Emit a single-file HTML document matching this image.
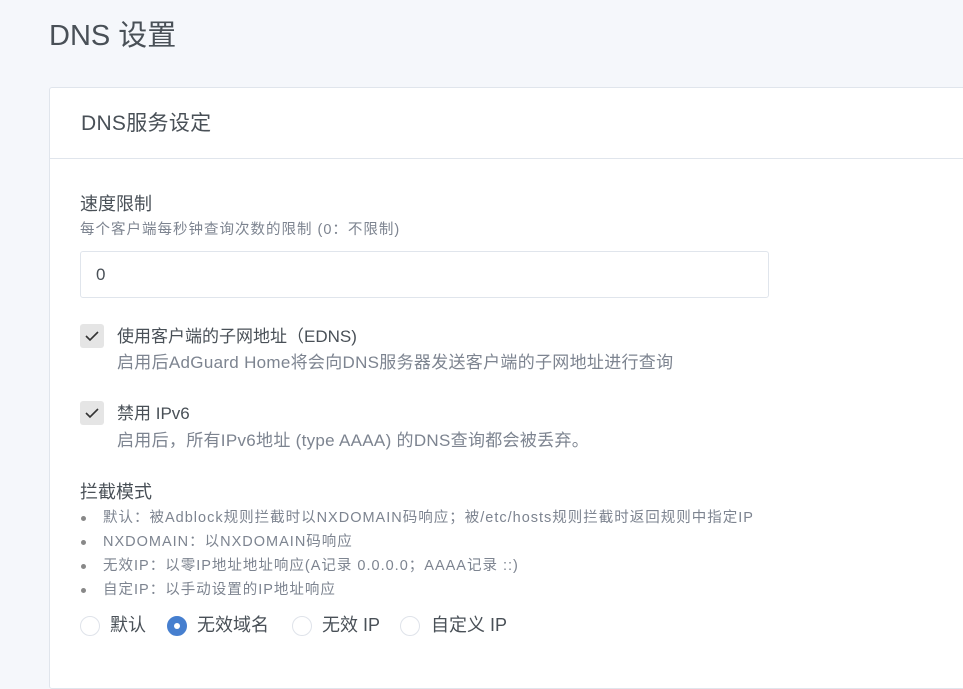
<!DOCTYPE html>
<html><head><meta charset="utf-8"><style>
body{margin:0;width:963px;height:645px;overflow:hidden;background:#f5f7fb;font-family:"Liberation Sans","Noto Sans CJK SC",sans-serif;color:#495057;position:relative}
.a{position:absolute;white-space:nowrap;line-height:1}
.card{position:absolute;left:49px;top:87px;width:930px;height:600px;background:#fff;border:1px solid #e0e5ec;border-radius:3px}
.hr{position:absolute;left:50px;top:158px;width:920px;height:1px;background:#e0e5ec}
.inp{position:absolute;left:80px;top:251px;width:687px;height:45px;border:1px solid #e0e5ec;border-radius:3px;background:#fff}
.cb{position:absolute;left:80px;width:24px;height:24px;background:#e5e5e5;border-radius:3px}
.cb svg{position:absolute;left:5px;top:6px}
.g{color:#7d8490}
.dot{position:absolute;left:81px;width:5px;height:5px;border-radius:50%;background:#888}
.r{position:absolute;top:616px;width:18px;height:18px;border:1px solid #dfe3ea;border-radius:50%;background:#fff}
.s{font-size:14.5px;letter-spacing:1px}
</style></head><body>
<div class="a" style="left:49px;top:22px;font-size:29px">DNS 设置</div>
<div class="card"></div>
<div class="hr"></div>
<div class="a" style="left:81px;top:113px;font-size:21px;letter-spacing:0.3px">DNS服务设定</div>
<div class="a" style="left:80px;top:195px;font-size:18px">速度限制</div>
<div class="a g s" style="left:80px;top:223px">每个客户端每秒钟查询次数的限制 (0：不限制)</div>
<div class="inp"></div>
<div class="a" style="left:96px;top:266px;font-size:17px">0</div>
<div class="cb" style="top:324px"><svg width="14" height="12" viewBox="0 0 14 12"><path d="M1 6l4 4 8-8" fill="none" stroke="#333" stroke-width="1.6"/></svg></div>
<div class="a" style="left:117px;top:328px;font-size:17px">使用客户端的子网地址（EDNS)</div>
<div class="a g" style="left:117px;top:354px;font-size:17px;letter-spacing:0.3px">启用后AdGuard Home将会向DNS服务器发送客户端的子网地址进行查询</div>
<div class="cb" style="top:401px"><svg width="14" height="12" viewBox="0 0 14 12"><path d="M1 6l4 4 8-8" fill="none" stroke="#333" stroke-width="1.6"/></svg></div>
<div class="a" style="left:117px;top:405px;font-size:17px">禁用 IPv6</div>
<div class="a g" style="left:117px;top:432px;font-size:17px;letter-spacing:0.3px">启用后，所有IPv6地址 (type AAAA) 的DNS查询都会被丢弃。</div>
<div class="a" style="left:80px;top:483px;font-size:18px">拦截模式</div>
<div class="dot" style="top:516px"></div><div class="a g s" style="left:103px;top:511px">默认：被Adblock规则拦截时以NXDOMAIN码响应；被/etc/hosts规则拦截时返回规则中指定IP</div>
<div class="dot" style="top:540px"></div><div class="a g s" style="left:103px;top:535px">NXDOMAIN：以NXDOMAIN码响应</div>
<div class="dot" style="top:564px"></div><div class="a g s" style="left:103px;top:559px">无效IP：以零IP地址地址响应(A记录 0.0.0.0；AAAA记录 ::)</div>
<div class="dot" style="top:588px"></div><div class="a g s" style="left:103px;top:583px">自定IP：以手动设置的IP地址响应</div>
<div class="r" style="left:80px"></div><div class="a" style="left:110px;top:616px;font-size:18px">默认</div>
<div class="r" style="left:167px;background:#467fcf;border-color:#467fcf"><div style="position:absolute;left:6px;top:6px;width:6px;height:6px;border-radius:50%;background:#fff"></div></div>
<div class="a" style="left:197px;top:616px;font-size:18px">无效域名</div>
<div class="r" style="left:292px"></div><div class="a" style="left:322px;top:616px;font-size:18px">无效 IP</div>
<div class="r" style="left:400px"></div><div class="a" style="left:431px;top:616px;font-size:18px">自定义 IP</div>
</body></html>
